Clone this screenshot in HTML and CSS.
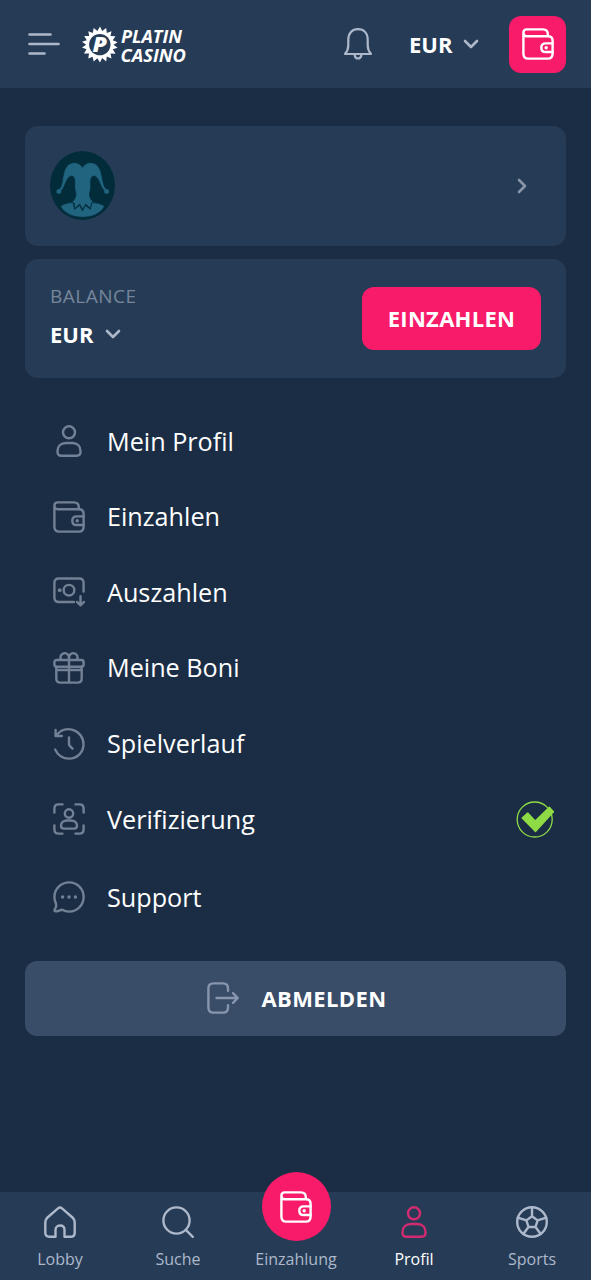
FILE: index.html
```html
<!DOCTYPE html>
<html lang="de">
<head>
<meta charset="utf-8">
<meta name="viewport" content="width=device-width, initial-scale=1">
<title>Platin Casino – Profil</title>
<link rel="stylesheet" href="styles.css">
</head>
<body>
<svg class="sprite" aria-hidden="true">
  <symbol id="user" viewBox="0 0 34 34"><circle cx="17" cy="8.3" r="6"/><path d="M14 19h6.500c5 0 8 3.500 8 8v1c0 2.500-1.500 3.700-4 3.700h-15c-2.500 0-4-1.200-4-3.700v-1c0-4.500 3-8 8.500-8z"/></symbol>
  <symbol id="wallet" viewBox="0 0 34 34"><path d="M26.800 9.200V7.200c0-3-1.800-4.800-4.800-4.800H5.700c-2 0-3.300 1.400-3.300 3.300s1.300 3.500 3.300 3.500H27c3 0 4.600 1.700 4.600 4.600v13c0 3-1.800 4.800-4.800 4.800H7.200c-3 0-4.800-1.800-4.800-4.800V5.700"/><path d="M31.600 16.400h-7c-2.700 0-4.300 1.800-4.300 4.300s1.600 4.300 4.300 4.300h7"/><circle class="dot" cx="25.200" cy="20.700" r="1.700"/></symbol>
  <symbol id="cash" viewBox="0 0 34 34"><path d="M22 27H6.900c-3 0-4.500-1.600-4.500-4.500V8c0-3 1.500-4.500 4.500-4.500h20.200c3 0 4.500 1.500 4.500 4.500v8.500"/><circle cx="17" cy="15.200" r="5.300"/><circle class="dot" cx="7.700" cy="15.200" r="1.900"/><path d="M28.500 21.200V30M25 26.900l3.500 3.400 3.500-3.400"/></symbol>
  <symbol id="gift" viewBox="0 0 34 34"><rect x="2.400" y="9" width="29.200" height="6.800" rx="2.200"/><path d="M4.300 15.800v11.700c0 2.700 1.500 4.100 4.200 4.100h17c2.700 0 4.200-1.400 4.200-4.100V15.800M17 9v22.500M4.500 19h25"/><path d="M17 9V7c0-3-2-5.200-4.700-4.800C9 2.700 7.500 5.500 9 9M17 9V7c0-3 2-5.200 4.700-4.800C25 2.700 26.500 5.500 25 9"/></symbol>
  <symbol id="history" viewBox="0 0 34 34"><path d="M3.600 2.900V9h6.300M4 9C8 3.400 13.800 1.100 20 2.700c7.300 1.900 11.600 8.100 11.500 14.800-.2 8.100-6.500 14.100-14.400 14.100-6.100 0-11.700-3.500-13.900-9"/><path d="M17 10.500v6.500q0 1.300 1 2.200l2.500 2.500"/></symbol>
  <symbol id="verify" viewBox="0 0 34 34"><path d="M2.400 10.500v-4c0-2.700 1.400-4.100 4.100-4.100h4M23.500 2.400h4c2.700 0 4.100 1.400 4.100 4.100v4M31.600 23.500v4c0 2.700-1.400 4.100-4.100 4.100h-4M10.500 31.600h-4c-2.700 0-4.100-1.400-4.100-4.100v-4"/><circle cx="17" cy="11.500" r="4.200"/><path d="M15 18.500h4c3.500 0 6 2.200 6 5.200 0 2-1 2.900-3 2.900H12c-2 0-3-.9-3-2.900 0-3 2.500-5.200 6-5.200z"/></symbol>
  <symbol id="chat" viewBox="0 0 34 34"><path d="M17.200 2.400c8.100 0 14.400 6.400 14.400 14.500s-6.300 14.700-14.400 14.700c-2.700 0-5-.7-7-1.900-2.500.4-4.700 1.900-6.600 1.700-1.500-.1-1.400-1-.8-2 1-1.600 1.800-3.400 1.300-5.300-1-2.200-1.700-4.500-1.700-7.100C2.400 8.900 9.100 2.400 17.200 2.400z"/><path class="dot" d="M12.300 17a1.700 1.700 0 1 1-3.400 0 1.700 1.700 0 1 1 3.400 0M18.700 17a1.700 1.700 0 1 1-3.400 0 1.700 1.700 0 1 1 3.400 0M25.100 17a1.700 1.700 0 1 1-3.400 0 1.700 1.700 0 1 1 3.400 0"/></symbol>
  <symbol id="logout" viewBox="0 0 34 34"><path d="M22 9.800V7.500c0-3.400-1.600-5.100-5-5.100H7.500c-3.400 0-5.100 1.700-5.100 5.100v19c0 3.400 1.700 5.100 5.100 5.100H17c3.400 0 5-1.700 5-5.100v-2.300M10.500 17h21M27 12.200l4.800 4.800-4.800 4.800"/></symbol>
  <symbol id="home" viewBox="0 0 34 34"><path d="M4.500 12.500 15 3.400q2-1.700 4 0l10.500 9.100q2.200 2 2.200 4.800v10.500c0 2.600-1.400 4-4 4h-6.200V25c0-2.700-1.700-4.500-4.500-4.500s-4.500 1.800-4.500 4.500v6.800H6.300c-2.600 0-4-1.400-4-4V17.300q0-2.800 2.200-4.800z"/></symbol>
  <symbol id="search" viewBox="0 0 34 34"><circle cx="15.500" cy="15.500" r="13.100"/><path d="m24.800 24.800 7 7"/></symbol>
  <symbol id="ball" viewBox="0 0 34 34"><circle cx="17" cy="17" r="14.800"/><path d="m17 11.300 5.600 4.100-2.100 6.600h-7l-2.100-6.600zM17 2.300v9M22.600 15.400l8.600-2.800M20.500 22l5.200 7M13.500 22l-5.200 7M11.400 15.400l-8.600-2.800"/></symbol>
  <symbol id="chevron" viewBox="0 0 16 10"><path d="m2 2 6 6 6-6"/></symbol>
</svg>

<header class="header">
  <svg class="burger" viewBox="0 0 32 24"><path d="M1.500 2.500h21M1.500 12h29M1.500 21.500h15"/></svg>
  <svg class="logo" viewBox="0 0 106 40">
    <polygon class="logo-sun" points="18,1.500 20.2,6 24.200,3 24.800,8 29.500,6.300 28.500,11.100 33.500,11.200 30.800,15.300 35.600,17.300 31.500,19.700 35.600,22.700 30.800,24.300 33.500,28.800 28.500,28.500 29.500,33.500 24.800,31.600 24.200,36.500 20.200,33 18,37.500 15.300,33.200 11.700,36.500 10.600,31.700 6.300,33.500 7,28.500 2,28.500 4.600,24.200 0,22.500 4.200,19.700 0,16.800 4.800,15.300 2.200,11 7.200,11 6.300,6.300 10.800,8 11.700,3 15.300,6"/>
    <circle class="logo-disc" cx="17.800" cy="19.600" r="10.700"/>
    <text class="logo-p" x="10.400" y="27.200" textLength="14.500" lengthAdjust="spacingAndGlyphs">P</text>
    <text class="logo-text" x="39" y="17.600" textLength="61" lengthAdjust="spacingAndGlyphs">PLATIN</text>
    <text class="logo-text" x="38.500" y="36.700" textLength="65.500" lengthAdjust="spacingAndGlyphs">CASINO</text>
  </svg>
  <svg class="bell" viewBox="0 0 30 34"><path d="M2 27h26c-2.200-2.400-3.300-5-3.300-8.700v-5.500C24.700 6 20.800 2.200 15 2.200S5.300 6 5.300 12.800v5.500C5.300 22 4.200 24.600 2 27zM11.600 28c.4 2.400 1.500 3.500 3.400 3.500s3-1.100 3.400-3.500"/></svg>
  <div class="currency"><span>EUR</span><svg class="chevron"><use href="#chevron"/></svg></div>
  <button class="wallet-button"><svg class="icon"><use href="#wallet"/></svg></button>
</header>

<main class="main">
  <section class="card user-card">
    <svg class="avatar" viewBox="0 0 65 69">
      <ellipse class="avatar-bg" cx="32.500" cy="34.500" rx="32.500" ry="34.500"/>
      <path class="avatar-fg" d="M32.500 16C29 11.500 24 10.500 19.500 13 13 17 13.500 27 11.500 34q-.7 2.500-2 3.800a2.700 2.700 0 1 0 1.900 1.700C15.500 35.500 16.500 25 21.500 25q2.500 0 3.200 3.500c.5 5-.5 9 1 13 .8 3-.5 7.500-4 9.500l2.500 1 .5 5.500 5-4.500 3 5.500 3-5.500 5 4.500.5-5.500 2.500-1c-3.500-2-4.800-6.500-4-9.500 1.500-4 .5-8 1-13q.7-3.500 3.200-3.500c5 0 6 10.500 10.100 14.500a2.700 2.700 0 1 0 1.900-1.700q-1.300-1.300-2-3.800C51.500 27 52 17 45.500 13 41 10.500 36 11.500 32.500 16z"/>
      <path class="avatar-fg" d="M10.500 55q5-3.200 12.500-3.500l1.500 7 5-4 3 5.500 3-5.500 5 4 1.500-7q7.500.3 12.500 3.500C47.500 70 17.500 70 10.500 55z"/>
    </svg>
    <svg class="chevron chevron-right"><use href="#chevron"/></svg>
  </section>
  <section class="card balance-card">
    <div class="balance">
      <span class="balance-label">BALANCE</span>
      <div class="currency currency-balance"><span>EUR</span><svg class="chevron"><use href="#chevron"/></svg></div>
    </div>
    <button class="deposit">EINZAHLEN</button>
  </section>

  <nav class="menu">
    <a class="menu-item"><svg class="icon"><use href="#user"/></svg><span>Mein Profil</span></a>
    <a class="menu-item"><svg class="icon"><use href="#wallet"/></svg><span>Einzahlen</span></a>
    <a class="menu-item"><svg class="icon"><use href="#cash"/></svg><span>Auszahlen</span></a>
    <a class="menu-item"><svg class="icon"><use href="#gift"/></svg><span>Meine Boni</span></a>
    <a class="menu-item"><svg class="icon"><use href="#history"/></svg><span>Spielverlauf</span></a>
    <a class="menu-item"><svg class="icon"><use href="#verify"/></svg><span>Verifizierung</span>
      <svg class="check" viewBox="0 0 40 38"><circle cx="18.700" cy="19.500" r="17.500"/><path d="m6.200 18 5.500-5 7.500 8L33.300 7.200l4.200 4.500L19.500 31.500z"/></svg>
    </a>
    <a class="menu-item menu-support"><svg class="icon"><use href="#chat"/></svg><span>Support</span></a>
  </nav>

  <button class="logout"><svg class="icon"><use href="#logout"/></svg><span>ABMELDEN</span></button>
</main>

<nav class="tabs">
  <a class="tab"><svg class="icon"><use href="#home"/></svg><span>Lobby</span></a>
  <a class="tab"><svg class="icon"><use href="#search"/></svg><span>Suche</span></a>
  <a class="tab tab-deposit"><span class="bubble"><svg class="icon"><use href="#wallet"/></svg></span><span>Einzahlung</span></a>
  <a class="tab tab-active"><svg class="icon"><use href="#user"/></svg><span>Profil</span></a>
  <a class="tab"><svg class="icon"><use href="#ball"/></svg><span>Sports</span></a>
</nav>
</body>
</html>
```
FILE: styles.css
```css
* { box-sizing: border-box; }
body {
  margin: 0;
  width: 591px;
  height: 1280px;
  display: flex;
  flex-direction: column;
  overflow: hidden;
  background: #1b2d44;
  color: #fff;
  font-family: "Open Sans", "Noto Sans", sans-serif;
}
button { border: 0; padding: 0; color: #fff; font: inherit; }
svg { display: block; flex: none; fill: none; stroke: currentColor; stroke-linecap: round; stroke-linejoin: round; }
.sprite { position: absolute; width: 0; height: 0; }
.icon { width: 34px; height: 34px; stroke-width: 2.4; }
.dot { fill: currentColor; stroke: none; }

.header {
  height: 88px;
  flex: none;
  display: flex;
  align-items: center;
  padding: 0 25px 0 28px;
  background: #263c56;
}
.burger { width: 32px; height: 24px; color: #adb8cb; stroke-width: 2.6; }
.logo { width: 106px; height: 40px; margin: 2px 0 0 22px; overflow: visible; }
.logo-sun { fill: #fff; stroke: none; }
.logo-disc { fill: #263c56; stroke: none; }
.logo-p, .logo-text { fill: #fff; stroke: none; font-weight: 700; font-style: italic; font-size: 18.500px; }
.logo-p { font-size: 21px; font-weight: 800; }
.bell { width: 30px; height: 34px; margin: 0 0 0 155px; color: #adb8cb; stroke-width: 2.2; }
.currency { display: flex; align-items: center; gap: 11px; margin: 0 0 0 36px; font-size: 22px; font-weight: 700; line-height: 30px; }
.chevron { width: 16px; height: 10px; color: #adb8cb; stroke-width: 2.6; }
.currency .chevron { margin-top: -1px; }
.wallet-button { width: 57px; height: 57px; margin-left: auto; border-radius: 12px; display: grid; place-items: center; background: #f71b69; }
.wallet-button .icon { stroke-width: 2.4; margin-top: -1px; }

.main { flex: 1; padding: 38px 25px 0; }
.card { height: 120px; border-radius: 13px; display: flex; align-items: center; justify-content: space-between; padding: 0 25px; background: #263c56; }
.avatar { width: 65px; height: 69px; margin-top: -1px; }
.avatar-bg { fill: #032c3b; stroke: none; }
.avatar-fg { fill: #206480; stroke: #032c3b; stroke-width: .6; }
.chevron-right { transform: rotate(-90deg); margin-right: 11px; color: #8996aa; }
.balance-card { margin-top: 13px; height: 119px; }
.balance { padding-bottom: 5px; }
.balance-label { display: block; font-size: 19px; line-height: 26px; color: #77869b; letter-spacing: .5px; }
.currency-balance { margin: 10px 0 0; gap: 12px; }
.deposit { width: 179px; height: 63px; padding-bottom: 2px; border-radius: 12px; background: #f71b69; font-size: 22px; font-weight: 700; letter-spacing: .3px; }

.menu { padding-top: 25.500px; }
.menu-item { height: 75.600px; display: flex; align-items: center; gap: 21px; padding: 0 10px 0 27px; font-size: 25.200px; }
.menu-item span { padding-bottom: 1.500px; }
.menu-item .icon { color: #728195; }
.menu-support { margin-top: 2.500px; }
.check { width: 40px; height: 38px; margin-left: auto; color: #8edb45; stroke-width: 1.3; }
.check path { fill: currentColor; }
.logout { width: 100%; height: 75px; margin-top: 25.800px; padding-left: 2px; border-radius: 12px; display: flex; align-items: center; justify-content: center; gap: 21px; background: #394d69; font-size: 22px; font-weight: 700; letter-spacing: .4px; }
.logout .icon { color: #8795ad; }

.tabs { height: 88px; flex: none; display: grid; grid-template-columns: repeat(5, 1fr); padding-left: 1px; background: #263c56; }
.tab { display: flex; flex-direction: column; align-items: center; padding-top: 13px; gap: 9px; color: #adb8cb; font-size: 16px; line-height: 22px; }
.tab-active { color: #fff; }
.tab-active .icon { color: #d22b70; }
.tab-deposit { padding-top: 0; margin-top: -20px; gap: 7px; }
.bubble { width: 69px; height: 69px; border-radius: 50%; display: grid; place-items: center; background: #f71b69; color: #fff; }
```
